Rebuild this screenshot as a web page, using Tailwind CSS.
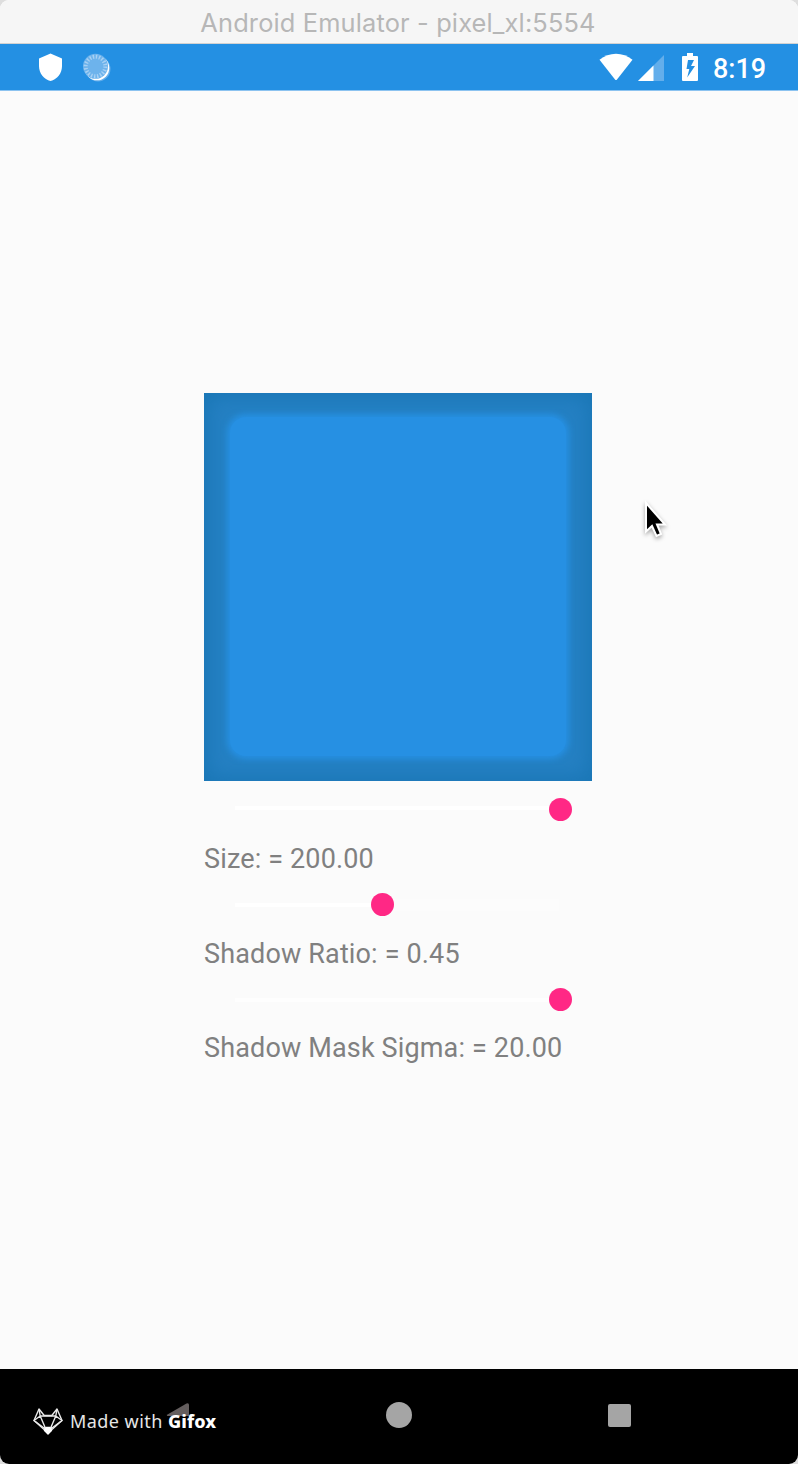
<!DOCTYPE html>
<html lang="en">
<head>
<meta charset="utf-8">
<title>Android Emulator - pixel_xl:5554</title>
<script src="https://cdn.jsdelivr.net/npm/@tailwindcss/browser@4"></script>
</head>
<body class="bg-[#dedede]">
<div class="flex h-[1464px] w-[798px] flex-col overflow-hidden rounded-[9px] bg-[#fbfbfb] font-['Roboto',sans-serif]">
  <header class="flex h-11 shrink-0 items-center justify-center border-b border-[#d2d2d2] bg-[#f6f6f6] pt-[3px]">
    <h1 class="-ml-0.5 whitespace-nowrap font-['Inter',sans-serif] text-[25.4px] leading-none tracking-[0.15px] text-[#b7b7b7]">Android Emulator - pixel_xl:5554</h1>
  </header>

  <div class="flex h-[47px] shrink-0 items-start border-b border-[#8cc3f0] bg-[#2490e3] pr-[31px] pl-[38px]">
    <svg class="mt-[9px] h-[29px] w-6" viewBox="0 0 24 29" fill="#fff"><path d="M12.5 0.5 L24 5.4 V13 C24 20.5 19 26.5 12.5 28 C6 26.5 1 20.5 1 13 V5.4Z"/></svg>
    <svg class="mt-[9px] ml-5 h-[30px] w-[30px]" viewBox="0 0 30 30">
      <circle cx="16" cy="16" r="12.5" fill="#64aeeb"/>
      <circle cx="15" cy="15" r="12.3" fill="#fff"/>
      <circle cx="13.5" cy="13.3" r="12.5" fill="#6db3ec"/>
      <circle cx="13.5" cy="13.5" r="9.8" fill="none" stroke="#a8d1f4" stroke-width="4" stroke-dasharray="1.4 1.68"/>
    </svg>
    <svg class="mt-[9px] mr-px ml-auto h-[28px] w-[34px]" viewBox="0 0 34 28" fill="#fff"><path d="M0.5 6.8 C10 -1.2 24 -1.2 33.5 6.8 L18 26.4 Q17 27.6 16 26.4Z"/></svg>
    <svg class="mt-[11px] ml-1 h-[26px] w-[26px]" viewBox="0 0 26 26"><path d="M26 0V26H0Z" fill="#63aeeb"/><path d="M15.5 10.5V26H0Z" fill="#fff"/></svg>
    <svg class="mt-[9px] ml-[18px] h-7 w-4" viewBox="0 0 16 28"><path d="M5 0H11V3H15Q16 3 16 4V27Q16 28 15 28H1Q0 28 0 27V4Q0 3 1 3H5Z" fill="#fff"/><path d="M6 7H12L9 13H13L5.2 24.5L7.3 16H4.5Z" fill="#2490e3"/></svg>
    <span class="mt-[9px] ml-[15px] w-[54px] text-[27px] leading-[32px] font-medium whitespace-nowrap text-white">8:19</span>
  </div>

  <main class="flex min-h-0 flex-1 flex-col pt-[302px] pl-[204px]">
    <div class="h-[388px] w-[388px] bg-[#2580c3] pt-6 pl-[26px] shadow-[inset_0_0_20px_4px_#1a76b5]">
      <div class="h-[339px] w-[336px] rounded-[16px] bg-[#2690e3] shadow-[0_0_6px_3px_#2690e3]"></div>
    </div>

    <div class="flex h-[57px] w-[388px] items-center pl-[31px]">
      <div class="-mt-[3px] h-1 w-[314px] bg-white"></div>
      <div class="h-[23.4px] w-[23.4px] rounded-full bg-[#ff2885]"></div>
    </div>
    <p class="h-[38px] text-[27px] leading-[42px] tracking-[0.15px] whitespace-nowrap text-[#808080]">Size: = 200.00</p>

    <div class="flex h-[57px] w-[388px] items-center pl-[31px]">
      <div class="h-1 w-[135.5px] bg-white"></div>
      <div class="h-[23.4px] w-[23.4px] rounded-full bg-[#ff2885]"></div>
      <div class="h-3 w-[165px] bg-[#fcfcfc]"></div>
    </div>
    <p class="h-[38px] text-[27px] leading-[42px] tracking-[0.15px] whitespace-nowrap text-[#808080]">Shadow Ratio: = 0.45</p>

    <div class="flex h-[57px] w-[388px] items-center pl-[31px]">
      <div class="h-1 w-[314px] bg-[#fefefe]"></div>
      <div class="h-[23.4px] w-[23.4px] rounded-full bg-[#ff2885]"></div>
    </div>
    <p class="h-[38px] text-[27px] leading-[40px] tracking-[0.15px] whitespace-nowrap text-[#808080]">Shadow Mask Sigma: = 20.00</p>
  </main>

  <nav class="relative flex h-[95px] shrink-0 items-start bg-black pl-[166px]">
    <svg class="mt-[33px] h-7 w-6" viewBox="0 0 24 28"><path d="M1.5 12.5 L20.5 1.4 Q23 0.5 23 3 V14 H1.5 Q0 13.5 1.5 12.5Z" fill="#645e5e"/></svg>
    <div class="mt-[33px] ml-[196px] h-[26px] w-[26px] rounded-full bg-[#a5a5a5]"></div>
    <div class="mt-[34.5px] ml-[195.5px] h-[23.5px] w-[23.5px] rounded-[2px] bg-[#a5a5a5]"></div>
    <div class="absolute top-[38px] left-[33px] flex items-center">
      <svg class="h-[28px] w-[30px]" viewBox="0 0 30 28" fill="none" stroke="#e8e8e8" stroke-width="1.4" stroke-linejoin="round">
        <path d="M6 2 L1 13.5 L15 26 L29 13.5 L24 2 L18.8 8.5 H11.2Z"/>
        <path d="M6 2 L7.2 9 L1 13.5 L13 22.5 L7.2 9 H22.8 L17 22.5 L29 13.5 L22.8 9 L24 2"/>
        <path d="M13 20.5 H17 L18.5 23.5 L15 27 L11.5 23.5Z" fill="#fff" stroke="#fff"/>
      </svg>
      <span class="ml-[7px] font-['Noto_Sans',sans-serif] text-[18px] leading-7 tracking-[0.45px] whitespace-nowrap text-[#e6e6e6]">Made with <b class="font-extrabold tracking-[0.1px] text-white">Gifox</b></span>
    </div>
  </nav>
</div>

<svg class="absolute top-[498px] left-[640px] h-[48px] w-[34px] drop-shadow-[0_2px_2px_rgba(0,0,0,0.35)]" viewBox="0 0 34 48"><path d="M6 5 V33.5 L12 28 L16.5 38 L21 36 L17 26.5 H25Z" fill="#000" stroke="#fff" stroke-width="2"/></svg>
</body>
</html>
